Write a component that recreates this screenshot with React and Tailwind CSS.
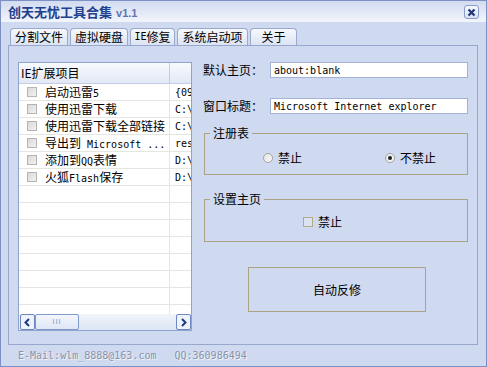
import React from 'react';

const tabs = [
  { label: '分割文件', w: 'w-[58px]' },
  { label: '虚拟硬盘', w: 'w-[58px]' },
  { label: 'IE修复', w: 'w-[45px]' },
  { label: '系统启动项', w: 'w-[71px]' },
  { label: '关于', w: 'w-[47px]' },
];

const items = [
  ['启动迅雷5', '{0926C9E8-3C4D-4B2A}'],
  ['使用迅雷下载', 'C:\\Program Files\\Thunder'],
  ['使用迅雷下载全部链接', 'C:\\Program Files\\Thunder'],
  ['导出到 Microsoft ...', 'res://EXCEL.EXE/3000'],
  ['添加到QQ表情', 'D:\\Program Files\\QQ'],
  ['火狐Flash保存', 'D:\\Program Files\\Firefox'],
];

// texte mixte : les parties ASCII en police à chasse fixe, comme dans l'original
const Mixed = ({ text }) => {
  const parts = text.match(/[\x00-\x7F]+|[^\x00-\x7F]+/g) || [];
  return parts.map((p, i) =>
    /[\x00-\x7F]/.test(p[0]) ? (
      <span key={i} className="font-['DejaVu_Sans_Mono',monospace] text-[10px] whitespace-pre">{p}</span>
    ) : (
      <span key={i}>{p}</span>
    )
  );
};

const Chevron = ({ dir }) => (
  <svg width="9" height="9" viewBox="0 0 9 9">
    <polyline
      points={dir === 'left' ? '6,1 2.5,4.5 6,8' : '3,1 6.5,4.5 3,8'}
      fill="none"
      stroke="#1d3a82"
      strokeWidth="2"
    />
  </svg>
);

const ExtensionList = () => (
  <div className="w-[174px] h-[269px] border border-[#8fa3cf] bg-white flex flex-col overflow-hidden">
    <div className="h-[21px] shrink-0 flex border-b border-[#c3cde3] bg-gradient-to-b from-[#f8fafd] to-[#e2e8f5]">
      <div className="w-[151px] border-r border-[#c3cde3] pl-[2px] flex items-center">IE扩展项目</div>
      <div className="flex-1" />
    </div>
    <div className="flex-1 overflow-hidden">
      {Array.from({ length: 14 }).map((_, i) => {
        const item = items[i];
        return (
          <div key={i} className="h-[17px] flex border-b border-[#e3e7df]">
            <div className="w-[151px] border-r border-[#e3e7df] flex items-center pl-[8px] whitespace-nowrap overflow-hidden">
              {item && (
                <>
                  <span className="w-[10px] h-[10px] shrink-0 border border-[#b4b4b4] bg-gradient-to-br from-[#d9d9d9] to-[#f2f2f2]" />
                  <span className="ml-[8px]"><Mixed text={item[0]} /></span>
                </>
              )}
            </div>
            <div className="flex-1 pl-[5px] flex items-center whitespace-nowrap overflow-hidden">
              {item && (
                <span className="font-['DejaVu_Sans_Mono',monospace] text-[10px]">{item[1]}</span>
              )}
            </div>
          </div>
        );
      })}
    </div>
    <div className="h-[16px] shrink-0 flex pl-[1px] bg-gradient-to-b from-[#f1f4fb] to-[#dde5f4]">
      <div className="w-[15px] h-full border border-[#6f86c0] rounded-[2px] bg-[#eef2fa] flex items-center justify-center">
        <Chevron dir="left" />
      </div>
      <div className="w-[44px] h-full border border-[#8198cb] rounded-[2px] bg-gradient-to-b from-[#f4f6fc] to-[#dfe6f5] flex items-center justify-center">
        <span className="text-[8px] tracking-[1px] text-[#8c9cc4] font-['Liberation_Sans']">III</span>
      </div>
      <div className="flex-1" />
      <div className="w-[15px] h-full border border-[#6f86c0] rounded-[2px] bg-[#eef2fa] flex items-center justify-center">
        <Chevron dir="right" />
      </div>
    </div>
  </div>
);

const Radio = ({ checked, label }) => (
  <div className="flex items-center">
    <span className="w-[10px] h-[10px] rounded-full border border-[#a3a3a3] bg-gradient-to-br from-[#e4e4e4] to-[#fafafa] flex items-center justify-center">
      {checked && <span className="w-[4px] h-[4px] rounded-full bg-[#222]" />}
    </span>
    <span className="ml-[5px]">{label}</span>
  </div>
);

const Group = ({ title, className, children }) => (
  <div className={`relative w-[264px] border border-[#aaa385] ${className}`}>
    <span className="absolute left-[5px] top-[-9px] px-[3px] leading-[16px] bg-[#cfdaf0]">{title}</span>
    {children}
  </div>
);

export default function App() {
  return (
    <div className="w-[487px] h-[367px] bg-[#cfdaf0] border border-[#7d8fc4] flex flex-col overflow-hidden text-[12px] text-black font-['Noto_Sans_CJK_SC',sans-serif]">
      {/* barre de titre */}
      <div className="h-[21px] shrink-0 flex items-center justify-between pl-[7px] pr-[7px] bg-gradient-to-b from-[#d2dbf0] to-[#f2f5fb]">
        <div className="flex items-baseline gap-[4px]">
          <span className="font-bold text-[13px] text-[#21408e]">创天无忧工具合集</span>
          <span className="font-bold text-[11px] text-[#6176ae] font-['Liberation_Sans',sans-serif]">v1.1</span>
        </div>
        <div className="w-[15px] h-[14px] mt-[1px] rounded-[3px] border border-[#8a9cc9] bg-gradient-to-b from-[#f6f8fd] to-[#d8e0f2] flex items-center justify-center">
          <svg width="9" height="9" viewBox="0 0 9 9">
            <path d="M1.5 1.5 L7.5 7.5 M7.5 1.5 L1.5 7.5" stroke="#1f3577" strokeWidth="2.2" />
          </svg>
        </div>
      </div>

      {/* onglets */}
      <div className="h-[17px] mt-[6px] shrink-0 flex items-end gap-[2px] pl-[9px]">
        {tabs.map((t) => (
          <div
            key={t.label}
            className={`${t.w} h-[17px] rounded-t-[4px] border border-b-0 border-[#9ba9cb] bg-gradient-to-b from-[#f6f8fc] to-[#dce4f3] flex items-center justify-center leading-none`}
          >
            <Mixed text={t.label} />
          </div>
        ))}
      </div>

      {/* panneau IE修复 */}
      <div className="ml-[7px] w-[470px] h-[300px] shrink-0 border border-[#97a7cd] flex pl-[9px] pt-[16px]">
        <ExtensionList />

        <div className="ml-[11px] flex flex-col">
          <div className="h-[16px] flex items-center">
            <span className="w-[67px]">默认主页：</span>
            <div className="w-[198px] h-[16px] border border-[#a3b3d8] bg-white flex items-center pl-[3px]">
              <span className="font-['DejaVu_Sans_Mono',monospace] text-[10px]">about:blank</span>
            </div>
          </div>
          <div className="h-[16px] mt-[20px] flex items-center">
            <span className="w-[67px]">窗口标题：</span>
            <div className="w-[198px] h-[16px] border border-[#a3b3d8] bg-white flex items-center pl-[3px]">
              <span className="font-['DejaVu_Sans_Mono',monospace] text-[10px]">Microsoft Internet explorer</span>
            </div>
          </div>

          <Group title="注册表" className="ml-[1px] mt-[19px] h-[42px]">
            <div className="flex pt-[15px] pl-[58px]">
              <Radio label="禁止" />
              <div className="ml-[83px]">
                <Radio checked label="不禁止" />
              </div>
            </div>
          </Group>

          <Group title="设置主页" className="ml-[1px] mt-[24px] h-[43px]">
            <div className="flex items-center pt-[13px] pl-[98px]">
              <span className="w-[10px] h-[10px] border border-[#b3ab86] bg-[#dbe3f3]" />
              <span className="ml-[5px]">禁止</span>
            </div>
          </Group>

          <button className="ml-[45px] mt-[25px] w-[178px] h-[45px] border border-[#aaa385] bg-transparent flex items-center justify-center">
            自动反修
          </button>
        </div>
      </div>

      {/* pied de page */}
      <div className="flex-1 flex items-center pl-[17px] text-[#8b94ab] font-['DejaVu_Sans_Mono',monospace] text-[10px] [text-shadow:1px_1px_0_#eef2fa]">
        <span>E-Mail:wlm_8888@163.com</span>
        <span className="ml-[18px]">QQ:360986494</span>
      </div>
    </div>
  );
}
